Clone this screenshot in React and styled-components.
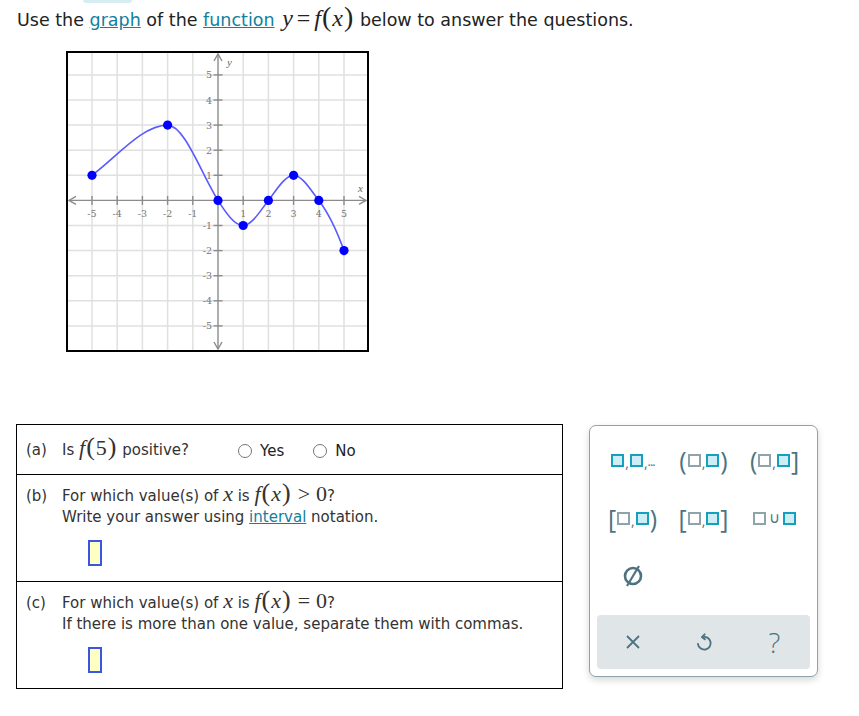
import React from "react";
import styled, { createGlobalStyle } from "styled-components";

const GlobalStyle = createGlobalStyle`
  body {
    margin: 0;
    background: #fff;
    font-family: "DejaVu Sans", Verdana, sans-serif;
    color: #222;
  }
`;

const Page = styled.div`
  padding-left: 16px;
`;

const TopTab = styled.div`
  margin-left: 67px;
  width: 49px;
  height: 3px;
  background: #d6eef3;
  border-radius: 0 0 8px 8px;
`;

const Header = styled.div`
  margin-top: 7px;
  padding-left: 1px;
  height: 20px;
  line-height: 20px;
  font-size: 17.5px;
  color: #222;
  white-space: nowrap;
`;

const TextLink = styled.a`
  color: #11809e;
  text-decoration: underline;
`;

const MathVar = styled.span`
  font-family: "Liberation Serif", "Times New Roman", serif;
  font-style: italic;
  font-size: ${(p) => p.$size || 22}px;
  line-height: 0;
  padding-left: ${(p) => p.$lead || 0}px;
`;

const MathOp = styled.span`
  font-family: "Liberation Serif", "Times New Roman", serif;
  font-size: ${(p) => p.$size || 22}px;
  line-height: 0;
  padding: 0 ${(p) => p.$space || 0}px;
`;

const Paren = styled.span`
  font-family: "Liberation Serif", "Times New Roman", serif;
  font-size: ${(p) => p.$size || 26}px;
  line-height: 0;
  padding: 0 1px;
`;

const GraphWrap = styled.div`
  margin: 21px 0 0 50px;
  width: 303px;
  height: 301px;
`;

const Bottom = styled.div`
  display: flex;
  align-items: flex-start;
  gap: 26px;
  margin-top: 72px;
`;

const Table = styled.div`
  width: 547px;
  border: 1px solid #000;
  box-sizing: border-box;
`;

const Row = styled.div`
  display: flex;
  height: ${(p) => p.$h}px;
  box-sizing: border-box;
  padding: ${(p) => p.$top}px 9px 0;
  border-top: ${(p) => (p.$first ? "none" : "1px solid #000")};
  font-size: 15px;
  color: #333;
`;

const Label = styled.div`
  width: 36px;
  flex: none;
  height: 22px;
  line-height: 22px;
`;

const Body = styled.div`
  display: flex;
  flex-direction: column;
`;

const Line = styled.div`
  height: ${(p) => p.$h || 22}px;
  line-height: ${(p) => p.$h || 22}px;
  white-space: nowrap;
`;

const RadioGroup = styled.span`
  display: inline-flex;
  align-items: center;
  vertical-align: middle;
  line-height: 0;
  margin-left: 49px;
  gap: 29px;
`;

const RadioOption = styled.label`
  display: inline-flex;
  align-items: center;
  gap: 8px;
  font-size: 15px;
  line-height: 18px;
  color: #222;
`;

const RadioCircle = styled.span`
  width: 14px;
  height: 14px;
  box-sizing: border-box;
  border: 1px solid #767676;
  border-radius: 50%;
  background: #fff;
`;

const AnswerBox = styled.div`
  margin: 13px 0 0 26px;
  width: 14px;
  height: 26px;
  box-sizing: border-box;
  background: #ffffc4;
  border: 2px solid #3a56e0;
`;

const Keypad = styled.div`
  width: 229px;
  height: 252px;
  margin-top: 1px;
  box-sizing: border-box;
  border: 1px solid #8ba3ab;
  border-radius: 7px;
  box-shadow: 0 3px 7px rgba(0, 0, 0, 0.16);
  padding: 5px 7px 7px;
  display: flex;
  flex-direction: column;
  background: #fff;
`;

const KeyGrid = styled.div`
  display: grid;
  grid-template-columns: repeat(3, 1fr);
  grid-auto-rows: 58px;
`;

const Key = styled.div`
  display: flex;
  align-items: center;
  justify-content: center;
  color: #4e7380;
  font-family: "Open Sans", "DejaVu Sans", sans-serif;
  font-size: 25px;
  line-height: 1;
`;

const Slot = styled.span`
  display: inline-block;
  width: 13px;
  height: 13px;
  box-sizing: border-box;
  border: 2px solid ${(p) => (p.$active ? "#17a0bd" : "#8fa3aa")};
  background: ${(p) => (p.$active ? "#cdeef4" : "#fff")};
  margin: 0 1px;
`;

const Comma = styled.span`
  font-size: 14px;
  align-self: flex-end;
  margin-bottom: 19px;
`;

const Dots = styled.span`
  font-size: 13px;
  align-self: flex-end;
  margin-bottom: 21px;
  letter-spacing: -1px;
`;

const Cup = styled.span`
  font-family: "DejaVu Sans", sans-serif;
  font-size: 15px;
  margin: 0 2px;
`;

const Bar = styled.div`
  margin-top: 10px;
  height: 54px;
  background: #e0e6e8;
  border-radius: 4px;
  display: grid;
  grid-template-columns: repeat(3, 1fr);
`;

const BarKey = styled.div`
  display: flex;
  align-items: center;
  justify-content: center;
  color: #4e7380;
  font-family: "Open Sans", "DejaVu Sans", sans-serif;
  font-size: 28px;
  font-weight: 300;
`;

// graph geometry
const X0 = 152;
const Y0 = 149.4;
const SX = 25.2;
const SY = 25.1;
const px = (x) => X0 + SX * x;
const py = (y) => Y0 - SY * y;

// x, y, slope
const POINTS = [
  [-5, 1, 0.75],
  [-2, 3, 0],
  [0, 0, -1.6],
  [1, -1, 0],
  [2, 0, 1.3],
  [3, 1, 0],
  [4, 0, -1.3],
  [5, -2, -2.8],
];

function curvePath() {
  let d = `M${px(POINTS[0][0])},${py(POINTS[0][1])}`;
  for (let i = 0; i < POINTS.length - 1; i++) {
    const [x0, y0, m0] = POINTS[i];
    const [x1, y1, m1] = POINTS[i + 1];
    const h = (x1 - x0) / 3;
    d += ` C${px(x0 + h)},${py(y0 + m0 * h)} ${px(x1 - h)},${py(y1 - m1 * h)} ${px(x1)},${py(y1)}`;
  }
  return d;
}

const STEPS = [-5, -4, -3, -2, -1, 1, 2, 3, 4, 5];

function Graph() {
  return (
    <GraphWrap>
      <svg width="303" height="301" viewBox="0 0 303 301">
        <rect x="0" y="0" width="303" height="301" fill="#fff" />
        {STEPS.map((i) => (
          <line key={"v" + i} x1={px(i)} y1="2" x2={px(i)} y2="299" stroke="#e0e0e0" strokeWidth="1.5" />
        ))}
        {STEPS.map((j) => (
          <line key={"h" + j} x1="2" y1={py(j)} x2="301" y2={py(j)} stroke="#e0e0e0" strokeWidth="1.5" />
        ))}
        <g stroke="#8c8c8c" strokeWidth="1.4" fill="none">
          <line x1="3" y1={Y0} x2="300" y2={Y0} />
          <line x1={X0} y1="3" x2={X0} y2="298" />
          <polyline points={`10,${Y0 - 4} 3,${Y0} 10,${Y0 + 4}`} />
          <polyline points={`293,${Y0 - 4} 300,${Y0} 293,${Y0 + 4}`} />
          <polyline points={`${X0 - 4},10 ${X0},3 ${X0 + 4},10`} />
          <polyline points={`${X0 - 4},291 ${X0},298 ${X0 + 4},291`} />
          {STEPS.map((i) => (
            <line key={"tx" + i} x1={px(i)} y1={Y0 - 4.5} x2={px(i)} y2={Y0 + 4.5} />
          ))}
          {STEPS.map((j) => (
            <line key={"ty" + j} x1={X0 - 4.5} y1={py(j)} x2={X0 + 4.5} y2={py(j)} />
          ))}
        </g>
        <g fill="#777" fontSize="9.5" fontFamily="'DejaVu Serif', serif">
          {STEPS.map((i) => (
            <text key={"lx" + i} x={px(i)} y={Y0 + 17} textAnchor="middle">
              {i}
            </text>
          ))}
          {STEPS.map((j) => (
            <text key={"ly" + j} x={X0 - 6} y={py(j) + 3.5} textAnchor="end">
              {j}
            </text>
          ))}
        </g>
        <g fill="#666" fontSize="11" fontStyle="italic" fontFamily="'Liberation Serif', serif">
          <text x={X0 + 9} y="15">y</text>
          <text x="292" y={Y0 - 8}>x</text>
        </g>
        <path d={curvePath()} fill="none" stroke="#5a5aff" strokeWidth="1.6" />
        {POINTS.map(([x, y]) => (
          <circle key={"p" + x} cx={px(x)} cy={py(y)} r="4.6" fill="#0000ff" />
        ))}
        <rect x="1" y="1" width="301" height="299" fill="none" stroke="#000" strokeWidth="2" />
      </svg>
    </GraphWrap>
  );
}

function FofX({ arg, size = 22, paren = 26 }) {
  return (
    <>
      <MathVar $size={size}>f</MathVar>
      <Paren $size={paren}>(</Paren>
      {arg === "5" ? <MathOp $size={size}>5</MathOp> : <MathVar $size={size}>x</MathVar>}
      <Paren $size={paren}>)</Paren>
    </>
  );
}

function EmptySet() {
  return (
    <svg width="26" height="26" viewBox="0 0 26 26">
      <circle cx="13" cy="13" r="8" fill="none" stroke="#4e7380" strokeWidth="2.6" />
      <line x1="7" y1="23" x2="19" y2="3" stroke="#4e7380" strokeWidth="2.2" />
    </svg>
  );
}

function ClearIcon() {
  return (
    <svg width="16" height="16" viewBox="0 0 16 16">
      <path d="M2 2 L14 14 M14 2 L2 14" stroke="#4e7380" strokeWidth="1.8" fill="none" />
    </svg>
  );
}

function UndoIcon() {
  return (
    <svg width="22" height="22" viewBox="0 0 20 20">
      <path d="M8.5 5.6 A5.8 5.8 0 1 1 4.5 11.8" stroke="#4e7380" strokeWidth="1.7" fill="none" strokeLinecap="round" />
      <path d="M10.6 3 L8.2 5.6 L10.8 7.6" stroke="#4e7380" strokeWidth="1.7" fill="none" strokeLinecap="round" strokeLinejoin="round" />
    </svg>
  );
}

function IntervalKey({ open, close }) {
  return (
    <Key>
      <span>{open}</span>
      <Slot />
      <Comma>,</Comma>
      <Slot $active />
      <span>{close}</span>
    </Key>
  );
}

export default function App() {
  return (
    <>
      <GlobalStyle />
      <Page>
        <TopTab />
        <Header>
          {"Use the "}
          <TextLink>graph</TextLink>
          {" of the "}
          <TextLink>function</TextLink>{" "}
          <MathVar $size={24} $lead={2}>y</MathVar>
          <MathOp $size={24} $space={4}>=</MathOp>
          <FofX size={24} paren={28} />
          {"  below to answer the questions."}
        </Header>

        <Graph />

        <Bottom>
          <Table>
            <Row $first $h={49} $top={14}>
              <Label>(a)</Label>
              <Line>
                {"Is "}
                <FofX arg="5" />
                {" positive?"}
                <RadioGroup>
                  <RadioOption>
                    <RadioCircle />
                    Yes
                  </RadioOption>
                  <RadioOption>
                    <RadioCircle />
                    No
                  </RadioOption>
                </RadioGroup>
              </Line>
            </Row>
            <Row $h={107} $top={10}>
              <Label>(b)</Label>
              <Body>
                <Line>
                  {"For which value(s) of "}
                  <MathVar>x</MathVar>
                  {" is "}
                  <FofX />
                  <MathOp $space={6}>&gt;</MathOp>
                  <MathOp>0</MathOp>?
                </Line>
                <Line $h={20}>
                  {"Write your answer using "}
                  <TextLink>interval</TextLink>
                  {" notation."}
                </Line>
                <AnswerBox />
              </Body>
            </Row>
            <Row $h={107} $top={10}>
              <Label>(c)</Label>
              <Body>
                <Line>
                  {"For which value(s) of "}
                  <MathVar>x</MathVar>
                  {" is "}
                  <FofX />
                  <MathOp $space={6}>=</MathOp>
                  <MathOp>0</MathOp>?
                </Line>
                <Line $h={20}>If there is more than one value, separate them with commas.</Line>
                <AnswerBox />
              </Body>
            </Row>
          </Table>

          <Keypad>
            <KeyGrid>
              <Key>
                <Slot $active />
                <Comma>,</Comma>
                <Slot $active />
                <Comma>,</Comma>
                <Dots>...</Dots>
              </Key>
              <IntervalKey open="(" close=")" />
              <IntervalKey open="(" close="]" />
              <IntervalKey open="[" close=")" />
              <IntervalKey open="[" close="]" />
              <Key>
                <Slot />
                <Cup>∪</Cup>
                <Slot $active />
              </Key>
              <Key>
                <EmptySet />
              </Key>
            </KeyGrid>
            <Bar>
              <BarKey>
                <ClearIcon />
              </BarKey>
              <BarKey>
                <UndoIcon />
              </BarKey>
              <BarKey>?</BarKey>
            </Bar>
          </Keypad>
        </Bottom>
      </Page>
    </>
  );
}
